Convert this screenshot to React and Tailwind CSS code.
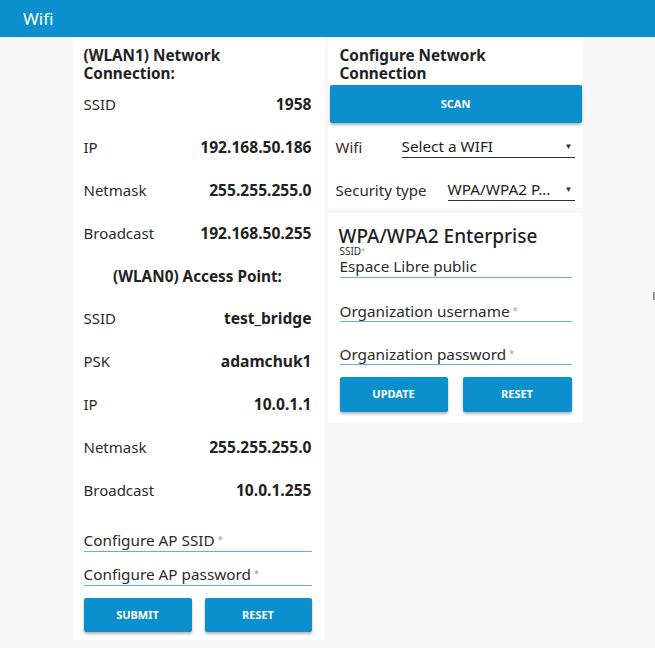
import React from "react";

const F = { fontFamily: '"Noto Sans", "Open Sans", sans-serif' };

function Row({ label, value }) {
  return (
    <div className="flex h-[43px] items-center justify-between">
      <span className="text-[15px] text-[#2b2b2b]">{label}</span>
      <span className="text-[15.6px] font-bold text-[#222]">{value}</span>
    </div>
  );
}

function Field({ label, value, small, className = "" }) {
  return (
    <div className={"border-b border-[#5fb0db] " + className}>
      {small && (
        <div className="text-[10px] leading-[10px] text-[#333]">
          {small}
          <span className="text-[7px] align-top text-[#999]">*</span>
        </div>
      )}
      <div className="text-[15.3px] leading-[20px] text-[#2b2b2b]">
        {value}
        {label && <span className="ml-[3px] text-[9px] align-top text-[#999]">*</span>}
      </div>
    </div>
  );
}

function Btn({ children, className = "" }) {
  return (
    <button
      className={
        "flex items-center justify-center rounded-[2px] bg-[#0b8fcd] text-[11px] font-bold text-white shadow-[0_2px_3px_rgba(0,0,0,0.3)] " +
        className
      }
    >
      {children}
    </button>
  );
}

function Select({ text, className = "" }) {
  return (
    <div className={"flex items-center justify-between border-b border-[#333] pb-[1px] " + className}>
      <span className="text-[15.3px] leading-[20px] text-[#222]">{text}</span>
      <span className="text-[8px] text-[#333] mr-[2px]">▼</span>
    </div>
  );
}

export default function App() {
  return (
    <div style={F} className="relative min-h-[648px] w-[655px] bg-[#f7f7f7]">
      <div className="flex h-[37px] items-center bg-[#0b8fcd] pl-[23px] text-[17px] text-white">
        Wifi
      </div>
      <div className="mx-auto flex w-[510px] items-start gap-[3px]">
        <div className="w-[252px] bg-white pl-[11px] pr-[13px] pt-[9px] pb-[8px]">
          <div className="text-[15.3px] font-bold leading-[18px] text-[#222]">
            (WLAN1) Network
            <br />
            Connection:
          </div>
          <div className="mt-[1px]">
            <Row label="SSID" value="1958" />
            <Row label="IP" value="192.168.50.186" />
            <Row label="Netmask" value="255.255.255.0" />
            <Row label="Broadcast" value="192.168.50.255" />
          </div>
          <div className="flex h-[42px] items-center justify-center text-[15.3px] font-bold text-[#222]">
            (WLAN0) Access Point:
          </div>
          <Row label="SSID" value="test_bridge" />
          <Row label="PSK" value="adamchuk1" />
          <Row label="IP" value="10.0.1.1" />
          <Row label="Netmask" value="255.255.255.0" />
          <Row label="Broadcast" value="10.0.1.255" />
          <Field label value="Configure AP SSID" className="mt-[18px] pb-[1px]" />
          <Field label value="Configure AP password" className="mt-[12px] pb-[1px]" />
          <div className="mt-[12px] flex justify-between">
            <Btn className="h-[34px] w-[108px]">SUBMIT</Btn>
            <Btn className="h-[34px] w-[107px]">RESET</Btn>
          </div>
        </div>
        <div className="flex w-[255px] flex-col gap-[5px]">
          <div className="bg-white px-[2px] pt-[9px] pb-[7px]">
            <div className="pl-[10px] text-[15.3px] font-bold leading-[18px] text-[#222]">
              Configure Network
              <br />
              Connection
            </div>
            <Btn className="mt-[3px] h-[38px] w-[252px]">SCAN</Btn>
            <div className="mt-[13px] flex items-center pl-[6px] pr-[6px]">
              <span className="w-[66px] text-[15px] text-[#2b2b2b]">Wifi</span>
              <Select text="Select a WIFI" className="flex-1" />
            </div>
            <div className="mt-[20px] flex items-center pl-[6px] pr-[6px]">
              <span className="w-[112px] text-[15px] text-[#2b2b2b]">Security type</span>
              <Select text="WPA/WPA2 P..." className="flex-1" />
            </div>
          </div>
          <div className="bg-white pl-[12px] pr-[11px] pt-[13px] pb-[11px]">
            <div className="-ml-[1px] text-[19px] font-medium leading-[20px] text-[#1f1f1f]">
              WPA/WPA2 Enterprise
            </div>
            <Field small="SSID" value="Espace Libre public" className="pb-[1px]" />
            <Field label value="Organization username" className="mt-[23px]" />
            <Field label value="Organization password" className="mt-[22px]" />
            <div className="mt-[12px] flex justify-between">
              <Btn className="h-[35px] w-[108px]">UPDATE</Btn>
              <Btn className="h-[35px] w-[109px]">RESET</Btn>
            </div>
          </div>
        </div>
      </div>
      <div className="absolute left-[653px] top-[292px] h-[8px] w-[2px] bg-[#999]" />
    </div>
  );
}
